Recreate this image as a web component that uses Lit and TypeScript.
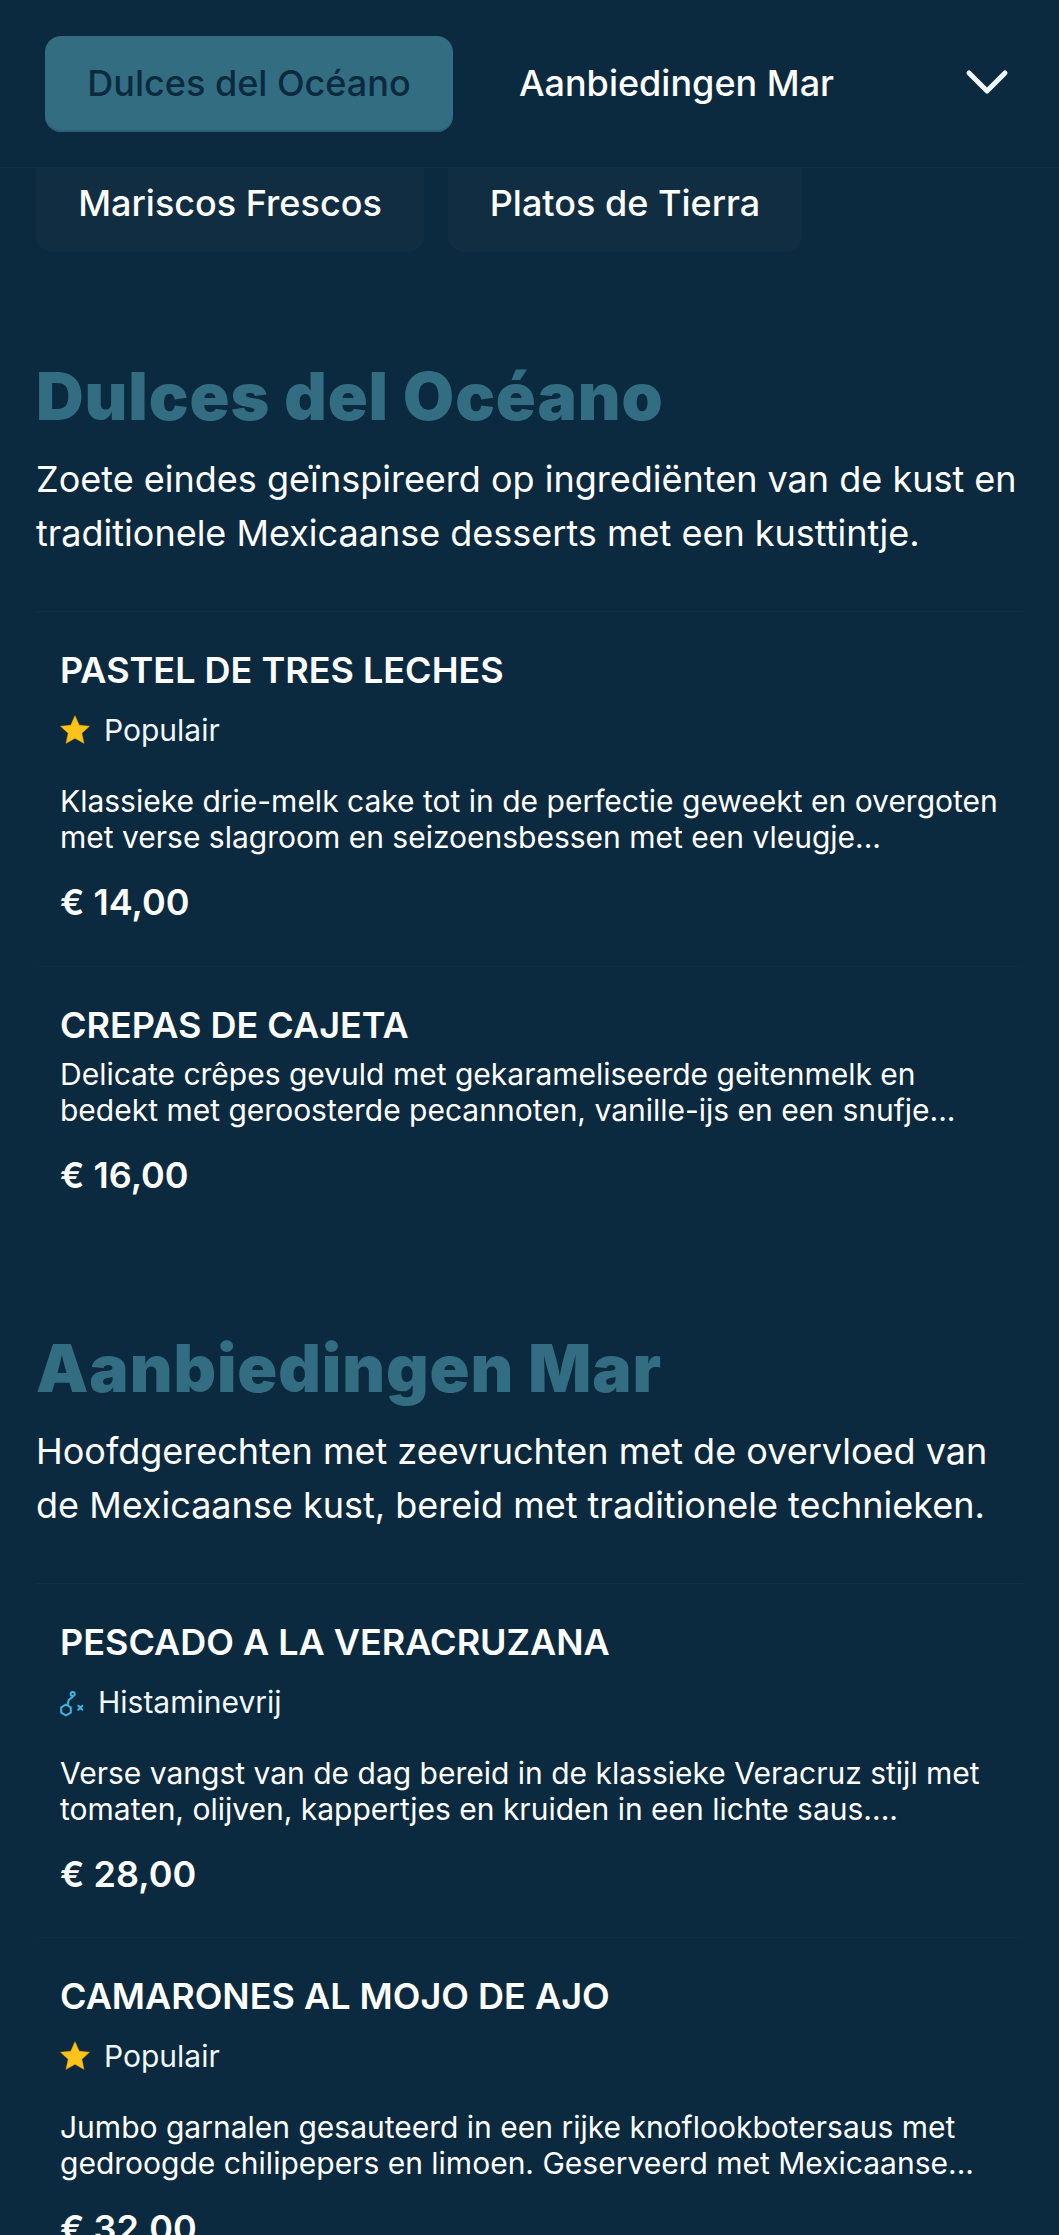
import { LitElement, html, css, svg } from "lit";
import { customElement } from "lit/decorators.js";

type Item = { name: string; tag?: "pop" | "hist"; desc: string[]; price: string };
type Section = { title: string; intro: string[]; items: Item[] };

const star = svg`<path d="M15 .8l4.2 9.4 10.2 1.1-7.6 6.9 2.1 10.1L15 23.2l-8.9 5.1 2.1-10.1L.6 11.3l10.2-1.1z" fill="#fcc419" stroke="#f2a900" stroke-width=".6" stroke-linejoin="round"/>`;
const mol = svg`<g fill="none" stroke="#3fb4e4" stroke-width="2" stroke-linecap="round" stroke-linejoin="round"><path d="M1.2 16.3L6 13.5l4.8 2.8v5.4L6 24.5l-4.8-2.8z"/><path d="M7.6 14.3l1.1-5.3 4-3.2"/><circle cx="12.7" cy="3" r="2"/><path d="M18.3 14.7l4 4M22.3 14.7l-4 4"/></g>`;

const sections: Section[] = [
  {
    title: "Dulces del Océano",
    intro: ["Zoete eindes geïnspireerd op ingrediënten van de kust en", "traditionele Mexicaanse desserts met een kusttintje."],
    items: [
      { name: "PASTEL DE TRES LECHES", tag: "pop", desc: ["Klassieke drie-melk cake tot in de perfectie geweekt en overgoten", "met verse slagroom en seizoensbessen met een vleugje..."], price: "€ 14,00" },
      { name: "CREPAS DE CAJETA", desc: ["Delicate crêpes gevuld met gekarameliseerde geitenmelk en", "bedekt met geroosterde pecannoten, vanille-ijs en een snufje..."], price: "€ 16,00" },
    ],
  },
  {
    title: "Aanbiedingen Mar",
    intro: ["Hoofdgerechten met zeevruchten met de overvloed van", "de Mexicaanse kust, bereid met traditionele technieken."],
    items: [
      { name: "PESCADO A LA VERACRUZANA", tag: "hist", desc: ["Verse vangst van de dag bereid in de klassieke Veracruz stijl met", "tomaten, olijven, kappertjes en kruiden in een lichte saus...."], price: "€ 28,00" },
      { name: "CAMARONES AL MOJO DE AJO", tag: "pop", desc: ["Jumbo garnalen gesauteerd in een rijke knoflookbotersaus met", "gedroogde chilipepers en limoen. Geserveerd met Mexicaanse..."], price: "€ 32,00" },
    ],
  },
];

@customElement("app-root")
export class AppRoot extends LitElement {
  static styles = css`
    :host { display: block; width: 1059px; height: 2235px; overflow: hidden; background: #0c2a3f; color: #fff; font-family: Inter, "Liberation Sans", sans-serif; }
    .head { height: 168px; box-sizing: border-box; border-bottom: 1px solid #103045; display: flex; align-items: flex-start; padding: 36px 0 0 45px; }
    .tab { height: 96px; box-sizing: border-box; padding-bottom: 2px; display: flex; align-items: center; justify-content: center; font-size: 36px; font-weight: 500; border-radius: 16px; }
    .tab.on { width: 408px; background: #336d81; color: #0c2a3f; box-shadow: inset 0 -2px 0 #2a6176; }
    .tab.off { margin-left: 66px; }
    .chev { margin-left: auto; margin-right: 50px; margin-top: 32px; width: 44px; height: 30px; }
    .row { display: flex; gap: 24px; padding: 0 36px; }
    .pill { height: 84px; box-sizing: border-box; padding-bottom: 14px; display: flex; align-items: center; justify-content: center; font-size: 36px; font-weight: 500; background: #102d42; border-radius: 0 0 16px 16px; }
    .pill.a { width: 388px; }
    .pill.b { width: 354px; }
    section { padding: 0 36px; }
    h2 { margin: 0; font-weight: 900; font-size: 66px; letter-spacing: 0.9px; line-height: 96px; color: #336d81; }
    .s1 { margin-top: 96px; }
    .s2 { margin-top: 81px; }
    .intro { margin-top: 8px; font-size: 36px; line-height: 54px; padding-bottom: 51px; border-bottom: 1px solid #103045; }
    .item { padding: 36px 24px 0; height: 355px; box-sizing: border-box; border-bottom: 1px solid #0e2d43; }
    .s2 .item { height: 354px; }
    .item.short { height: 272px; border-bottom: none; }
    .name { font-size: 36px; font-weight: 600; line-height: 44px; }
    .tag { display: flex; align-items: center; gap: 14px; margin-top: 17px; font-size: 30px; line-height: 42px; height: 42px; color: #f1f8fb; }
    .star { width: 30px; height: 30px; }
    .mol { width: 24px; height: 26px; margin-top: 3px; }
    .desc { margin-top: 32px; font-size: 30px; line-height: 36px; }
    .desc.tight { margin-top: 9px; }
    .price { margin-top: 23px; font-size: 36px; font-weight: 600; line-height: 48px; }
  `;

  private renderItem(i: Item) {
    return html`<div class="item ${i.tag ? "" : "short"}">
      <div class="name">${i.name}</div>
      ${i.tag === "pop"
        ? html`<div class="tag"><svg class="star" viewBox="0 0 30 30">${star}</svg>Populair</div>`
        : i.tag === "hist"
          ? html`<div class="tag"><svg class="mol" viewBox="0 0 24 26">${mol}</svg>Histaminevrij</div>`
          : ""}
      <div class="desc ${i.tag ? "" : "tight"}">${i.desc.map((l) => html`<div>${l}</div>`)}</div>
      <div class="price">${i.price}</div>
    </div>`;
  }

  render() {
    return html`
      <div class="head">
        <div class="tab on">Dulces del Océano</div>
        <div class="tab off">Aanbiedingen Mar</div>
        <svg class="chev" viewBox="0 0 44 30"><path d="M4 5l18 18L40 5" fill="none" stroke="#f1f8fb" stroke-width="5" stroke-linecap="round" stroke-linejoin="round"/></svg>
      </div>
      <div class="row"><div class="pill a">Mariscos Frescos</div><div class="pill b">Platos de Tierra</div></div>
      ${sections.map(
        (s, n) => html`<section class="${n === 0 ? "s1" : "s2"}">
          <h2>${s.title}</h2>
          <div class="intro">${s.intro.map((l) => html`<div>${l}</div>`)}</div>
          ${s.items.map((i) => this.renderItem(i))}
        </section>`
      )}
    `;
  }
}
